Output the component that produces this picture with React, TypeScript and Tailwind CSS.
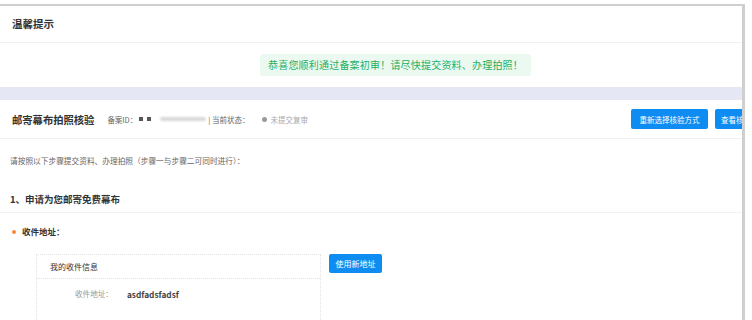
import React from "react";

export default function App() {
  const font = { fontFamily: '"Noto Sans CJK SC", "Noto Sans", sans-serif' };
  return (
    <div className="w-[752px] h-[320px] bg-white overflow-hidden pt-[4px]" style={font}>
      <div className="w-[745px] h-[320px] border-t-[2px] border-r-[3px] border-[#cfcfcf] flex flex-col">
        {/* 温馨提示 header */}
        <div className="h-[38px] flex items-center pl-[12px] border-b border-[#f0f0f0]">
          <span className="text-[10.5px] font-bold text-[#333]">温馨提示</span>
        </div>
        {/* alert */}
        <div className="h-[45px] flex items-center">
          <div className="ml-[260px] h-[22px] px-[8px] flex items-center bg-[#ebf9f0] rounded-[3px]">
            <span className="text-[10px] text-[#22b066] tracking-[0.2px]">恭喜您顺利通过备案初审！请尽快提交资料、办理拍照！</span>
          </div>
        </div>
        {/* lavender band */}
        <div className="h-[14px] bg-[#e5e7f5]" />
        {/* section header */}
        <div className="h-[40px] flex items-center pl-[12px] border-b border-[#f0f0f0]">
          <span className="text-[10.3px] font-bold text-[#333]">邮寄幕布拍照核验</span>
          <span className="ml-[13px] text-[7.5px] text-[#666]">备案ID：</span>
          <span className="ml-[2px] w-[4px] h-[4px] bg-[#555]" />
          <span className="ml-[4px] w-[4px] h-[4px] bg-[#555]" />
          <span className="ml-[9px] w-[46px] h-[4px] bg-[#d8d8d8] rounded-full blur-[1px]" />
          <span className="ml-[2px] text-[7.5px] text-[#666]">| 当前状态：</span>
          <span className="ml-[13px] w-[5px] h-[5px] rounded-full bg-[#999]" />
          <span className="ml-[3px] text-[7.5px] text-[#aaa]">未提交复审</span>
          <div className="ml-auto flex items-center gap-[7px]">
            <div className="w-[77px] h-[20px] bg-[#0f8cf1] rounded-[2px] flex items-center justify-center">
              <span className="text-[7.5px] text-white">重新选择核验方式</span>
            </div>
            <div className="w-[27px] h-[20px] bg-[#0f8cf1] rounded-l-[2px] flex items-center pl-[6px] overflow-hidden whitespace-nowrap">
              <span className="text-[7.5px] text-white">查看核</span>
            </div>
          </div>
        </div>
        {/* body */}
        <div className="pl-[10px] pt-[17px]">
          <div className="text-[7.7px] text-[#666] leading-[10px]">请按照以下步骤提交资料、办理拍照（步骤一与步骤二可同时进行）：</div>
        </div>
        <div className="pl-[10px] pt-[27px] pb-[7px] border-b border-[#f2f2f2]">
          <div className="text-[9.5px] font-bold text-[#333] leading-[12px]">1、申请为您邮寄免费幕布</div>
        </div>
        <div className="pl-[12px] pt-[12px] flex items-center">
          <span className="w-[4px] h-[4px] rounded-full bg-[#f08a3c]" />
          <span className="ml-[6px] text-[8.5px] font-bold text-[#333]">收件地址：</span>
        </div>
        <div className="pl-[36px] pt-[16px] flex items-start gap-[8px]">
          <div className="w-[285px] h-[70px] border border-dotted border-[#e2e2e2]">
            <div className="h-[24px] flex items-center pl-[13px] border-b border-dotted border-[#e2e2e2]">
              <span className="text-[8px] text-[#333]">我的收件信息</span>
            </div>
            <div className="h-[30px] flex items-center pl-[38px]">
              <span className="text-[7.6px] text-[#999]">收件地址：</span>
              <span className="ml-[14px] text-[8.3px] font-semibold text-[#444]">asdfadsfadsf</span>
            </div>
          </div>
          <div className="w-[53px] h-[19px] bg-[#0f8cf1] rounded-[2px] flex items-center justify-center">
            <span className="text-[8px] text-white">使用新地址</span>
          </div>
        </div>
      </div>
    </div>
  );
}
